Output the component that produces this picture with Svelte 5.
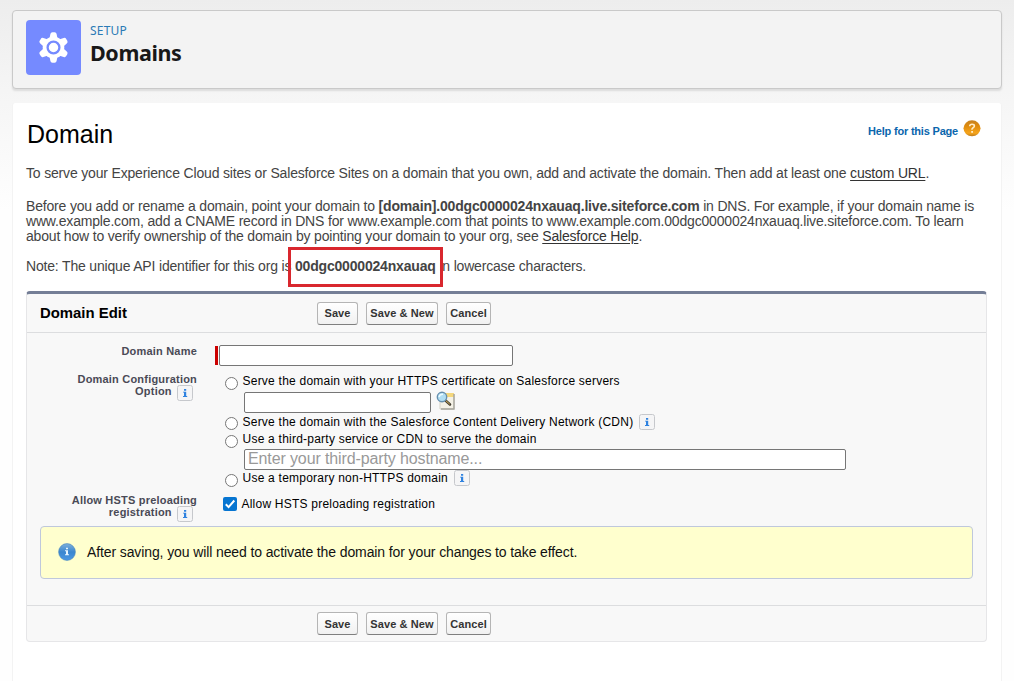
<script lang="ts">
    let domainName = $state('');
    let certificate = $state('');
    let hostname = $state('');
    let config = $state('');
    let preload = $state(true);

    const buttons = ['Save', 'Save & New', 'Cancel'];
</script>

{#snippet info()}
    <span class="info">
        <svg width="16" height="16" viewBox="0 0 16 16">
            <rect x="0.5" y="0.5" width="15" height="15" rx="2" fill="#f5f5f6" stroke="#c6c8cc" />
            <path d="M7 4h2.2v1.7H7zM6 6.7h3.2v4.4h1V12H6v-.9h1V7.6H6z" fill="#2f82e0" />
        </svg>
    </span>
{/snippet}

{#snippet actions()}
    <div class="actions">
        {#each buttons as label}
            <button type="button">{label}</button>
        {/each}
    </div>
{/snippet}

<div class="page">
    <header>
        <div class="tile">
            <svg width="30" height="32" viewBox="0 0 30 32">
                <g fill="#fff">
                    <circle cx="14.5" cy="15.5" r="10.8" />
                    {#each [0, 60, 120, 180, 240, 300] as angle}
                        <path d="M11.4 2q.3-1.8 2-1.8h2.2q1.7 0 2 1.8l.8 4h-7.8z" transform="rotate({angle} 14.5 15.5)" />
                    {/each}
                </g>
                <circle cx="14.5" cy="15.5" r="5.9" fill="#fff" stroke="#758aff" stroke-width="2.3" />
            </svg>
        </div>
        <div class="heading">
            <span class="eyebrow">SETUP</span>
            <h1>Domains</h1>
        </div>
    </header>

    <main>
        <div class="title">
            <h2>Domain</h2>
            <div class="help">
                <span>Help for this Page</span>
                <svg width="18" height="17" viewBox="0 0 18 17">
                    <defs>
                        <linearGradient id="orange" x1="0" y1="0" x2="0" y2="1">
                            <stop offset="0" stop-color="#c68222" />
                            <stop offset="0.35" stop-color="#de8a0c" />
                            <stop offset="0.8" stop-color="#f6a51c" />
                            <stop offset="1" stop-color="#bd7b1c" />
                        </linearGradient>
                    </defs>
                    <ellipse cx="9" cy="8.3" rx="8.5" ry="8" fill="url(#orange)" />
                    <path d="M6.7 6.3q.1-2 2.4-2t2.3 1.8q0 1-1.3 1.7t-1 1.9" fill="none" stroke="#ffedc8" stroke-width="1.6" />
                    <rect x="8.2" y="11" width="1.8" height="1.8" fill="#ffedc8" />
                </svg>
            </div>
        </div>

        <div class="intro">
            <p>To serve your Experience Cloud sites or Salesforce Sites on a domain that you own, add and activate the domain. Then add at least one <u>custom URL</u>.</p>
            <p>
                Before you add or rename a domain, point your domain to <b>[domain].00dgc0000024nxauaq.live.siteforce.com</b> in DNS. For example, if your domain name is<br />
                www.example.com, add a CNAME record in DNS for www.example.com that points to www.example.com.00dgc0000024nxauaq.live.siteforce.com. To learn<br />
                about how to verify ownership of the domain by pointing your domain to your org, see <u>Salesforce Help</u>.
            </p>
            <p>Note: The unique API identifier for this org is <b class="org">00dgc0000024nxauaq</b> in lowercase characters.</p>
        </div>

        <form>
            <div class="bar top">
                <h3>Domain Edit</h3>
                {@render actions()}
            </div>

            <div class="fields">
                <div class="row name">
                    <label for="domain">Domain Name</label>
                    <div class="required"><input id="domain" type="text" bind:value={domainName} /></div>
                </div>

                <div class="row">
                    <div class="label">Domain Configuration<br />Option {@render info()}</div>
                    <div class="options">
                        <label class="option first"><input type="radio" value="https" bind:group={config} /><span>Serve the domain with your HTTPS certificate on Salesforce servers</span></label>
                        <div class="sub">
                            <input class="cert" type="text" bind:value={certificate} />
                            <svg width="20" height="20" viewBox="0 0 20 20">
                                <path d="M4 3h14v15H4z" fill="#f4f1e6" stroke="#d5d2c7" />
                                <path d="M8 2h10v4H8z" fill="#f4d77d" />
                                <path d="M18 3v15H5" fill="none" stroke="#a5a49c" stroke-width="1.4" />
                                <path d="M9.5 9.5l4.5 4" stroke="#433e32" stroke-width="2.6" stroke-linecap="round" />
                                <path d="M9.3 9.2l4.5 4" stroke="#d8b35c" stroke-width="1" />
                                <circle cx="6" cy="6" r="4.7" fill="#b1def3" stroke="#668fae" stroke-width="1.4" />
                                <path d="M3 6q1-3 4-2.8" fill="none" stroke="#edfaff" stroke-width="1.4" />
                            </svg>
                        </div>
                        <label class="option"><input type="radio" value="cdn" bind:group={config} /><span>Serve the domain with the Salesforce Content Delivery Network (CDN)</span>{@render info()}</label>
                        <label class="option third"><input type="radio" value="third" bind:group={config} /><span>Use a third-party service or CDN to serve the domain</span></label>
                        <div class="sub"><input class="host" type="text" placeholder="Enter your third-party hostname..." bind:value={hostname} /></div>
                        <label class="option last"><input type="radio" value="temp" bind:group={config} /><span>Use a temporary non-HTTPS domain</span>{@render info()}</label>
                    </div>
                </div>

                <div class="row hsts">
                    <div class="label">Allow HSTS preloading<br />registration {@render info()}</div>
                    <label class="check">
                        <input type="checkbox" bind:checked={preload} />
                        <svg width="14" height="14" viewBox="0 0 14 14">
                            <rect width="14" height="14" rx="2" fill="#0675d1" />
                            {#if preload}<path d="M2.8 7.2l2.8 2.9 5.7-6.6" fill="none" stroke="#fff" stroke-width="2" />{/if}
                        </svg>
                        <span>Allow HSTS preloading registration</span>
                    </label>
                </div>

                <div class="notice">
                    <svg width="18" height="18" viewBox="0 0 18 18">
                        <defs>
                            <linearGradient id="blue" x1="0" y1="0" x2="0" y2="1">
                                <stop offset="0" stop-color="#7eb0dc" />
                                <stop offset="0.5" stop-color="#3b87cf" />
                                <stop offset="1" stop-color="#4a98e5" />
                            </linearGradient>
                        </defs>
                        <circle cx="9" cy="9" r="8.4" fill="url(#blue)" stroke="#4b88bb" stroke-width="0.6" />
                        <path d="M8 4.8h2v1.5H8zM7 7.3h3v4h1v1H7v-1h1v-3H7z" fill="#e6f5ff" />
                    </svg>
                    <span>After saving, you will need to activate the domain for your changes to take effect.</span>
                </div>
            </div>

            <div class="bar bottom">
                {@render actions()}
            </div>
        </form>
    </main>
</div>

<style>
    :global(body) {
        overflow: hidden;
    }

    *, *::after {
        box-sizing: border-box;
    }

    .page {
        height: 681px;
        padding: 10px 12px 0;
        background: linear-gradient(#ededed, #f5f5f5 90px, #fefefe 210px);
        font-family: "Liberation Sans", Arial, sans-serif;
        color: #3e3e3c;
    }

    svg {
        display: block;
    }

    h1, h2, h3, p {
        margin: 0;
    }

    header {
        display: flex;
        width: 990px;
        height: 79px;
        padding: 9px 13px;
        border: 1px solid #c9c9c9;
        border-radius: 4px;
        background: #f3f3f3;
        box-shadow: 0 2px 2px rgba(0, 0, 0, 0.1);
    }

    .tile {
        display: flex;
        align-items: center;
        justify-content: center;
        width: 55px;
        height: 55px;
        border-radius: 4px;
        background: #758aff;
    }

    .heading {
        display: flex;
        flex-direction: column;
        padding: 2px 0 0 9px;
        font-family: "Noto Sans", "Open Sans", sans-serif;
    }

    .eyebrow {
        font-size: 12px;
        line-height: 18px;
        letter-spacing: 0.2px;
        color: #2a7ab5;
    }

    h1 {
        font-size: 21.5px;
        line-height: 26px;
        letter-spacing: -0.4px;
        color: #181818;
    }

    main {
        width: 990px;
        height: 578px;
        margin-top: 14px;
        padding: 0 13px;
        border: solid #f3f3f3;
        border-width: 0 1px;
        border-radius: 3px 3px 0 0;
        background: #fff;
    }

    .title {
        display: flex;
        justify-content: space-between;
        height: 62px;
        padding: 16px 7px 0 1px;
    }

    h2 {
        font-size: 25px;
        font-weight: normal;
        line-height: 31px;
        color: #000;
    }

    .help {
        display: flex;
        gap: 5px;
        font-size: 11px;
        font-weight: bold;
        line-height: 24px;
        letter-spacing: -0.2px;
        color: #0a66ad;
    }

    .help svg {
        margin-top: 1px;
    }

    .intro {
        font-size: 14px;
        line-height: 15px;
        letter-spacing: -0.18px;
        white-space: nowrap;
        color: #444;
    }

    .intro p {
        margin-bottom: 15px;
    }

    .intro p:first-child {
        height: 19px;
        padding-top: 1px;
        letter-spacing: -0.173px;
    }

    u {
        color: #333;
        text-underline-offset: 2px;
    }

    .org {
        position: relative;
    }

    .org::after {
        content: "";
        position: absolute;
        left: -7px;
        top: -11px;
        width: 155px;
        height: 40px;
        border: 3px solid #d9272e;
    }

    form {
        width: 961px;
        height: 351px;
        margin-top: 17px;
        border: 1px solid #e6e6e8;
        border-top: 3px solid #747e96;
        border-radius: 4px;
        background: #f8f8f8;
    }

    .bar {
        display: flex;
        align-items: center;
        padding-left: 13px;
    }

    .top {
        height: 39px;
        border-bottom: 1px solid #dcdddf;
    }

    .bottom {
        height: 36px;
        padding-left: 290px;
        border-top: 1px solid #dcdddf;
    }

    h3 {
        width: 277px;
        font-size: 14.9px;
        color: #000;
    }

    .actions {
        display: flex;
        gap: 8px;
    }

    button {
        width: 41px;
        height: 23px;
        padding: 0;
        border: 1px solid #b5b5b5;
        border-bottom-color: #7f7f7f;
        border-radius: 3px;
        background: linear-gradient(#fff, #f1f1f1);
        font: bold 11px "Liberation Sans", Arial, sans-serif;
        letter-spacing: 0.1px;
        white-space: nowrap;
        color: #333;
    }

    button:nth-child(2) {
        width: 72px;
    }

    button:nth-child(3) {
        width: 45px;
    }

    .fields {
        height: 272px;
        padding: 12px 13px 0;
    }

    .row {
        display: grid;
        grid-template-columns: 157px 1fr;
        column-gap: 18px;
    }

    .name {
        height: 26px;
    }

    .label, .name label {
        font-size: 11px;
        font-weight: bold;
        line-height: 12px;
        letter-spacing: 0.2px;
        text-align: right;
        color: #4a4a56;
    }

    .label {
        padding-top: 2px;
    }

    .label .info {
        margin: 0 4px 0 2px;
        vertical-align: top;
    }

    .info {
        display: inline-block;
    }

    input[type="text"] {
        height: 21px;
        margin: 0;
        padding: 0 3px 1px;
        border: 1px solid #767676;
        border-radius: 2px;
        background: #fff;
        font: 16px "Liberation Sans", Arial, sans-serif;
        letter-spacing: -0.12px;
    }

    input::placeholder {
        color: #999;
    }

    .required {
        height: 19px;
        margin-top: 1px;
        border-left: 3px solid #c00;
    }

    .required input {
        display: block;
        width: 294px;
        margin: -1px 0 0 1px;
    }

    .options {
        padding-left: 10px;
    }

    .option {
        display: flex;
        align-items: center;
        height: 18px;
        font-size: 12px;
        letter-spacing: 0.23px;
        color: #000;
    }

    .first {
        height: 20px;
        margin-bottom: 1px;
    }

    .third span {
        margin-top: -3px;
    }

    .last {
        margin-top: -1px;
    }

    .option input {
        width: 13px;
        height: 13px;
        margin: 3px 4.5px 0 0;
    }

    .first input, .last input {
        margin-top: 4px;
    }

    .option .info {
        margin-left: 6px;
    }

    .sub {
        display: flex;
        gap: 5px;
        padding-left: 19px;
    }

    .sub svg {
        margin-top: -1px;
    }

    .cert {
        width: 187px;
    }

    .host {
        width: 602px;
    }

    .hsts {
        height: 34px;
        margin-top: 5px;
    }

    .check {
        display: flex;
        align-items: center;
        gap: 4.5px;
        height: 20px;
        padding: 3px 0 0 8px;
        font-size: 12px;
        letter-spacing: 0.22px;
        color: #000;
    }

    .check input {
        position: absolute;
        opacity: 0;
    }

    .notice {
        display: flex;
        align-items: center;
        gap: 11px;
        width: 933px;
        height: 53px;
        padding-left: 17px;
        border: 1px solid #bfc8dc;
        border-radius: 4px;
        background: #ffffce;
        font-size: 14px;
        letter-spacing: -0.11px;
        color: #111;
    }

    .notice svg {
        margin: -1px 0 0 -0.5px;
    }

    .notice span {
        margin: -2px 0 0 0.5px;
    }
</style>
